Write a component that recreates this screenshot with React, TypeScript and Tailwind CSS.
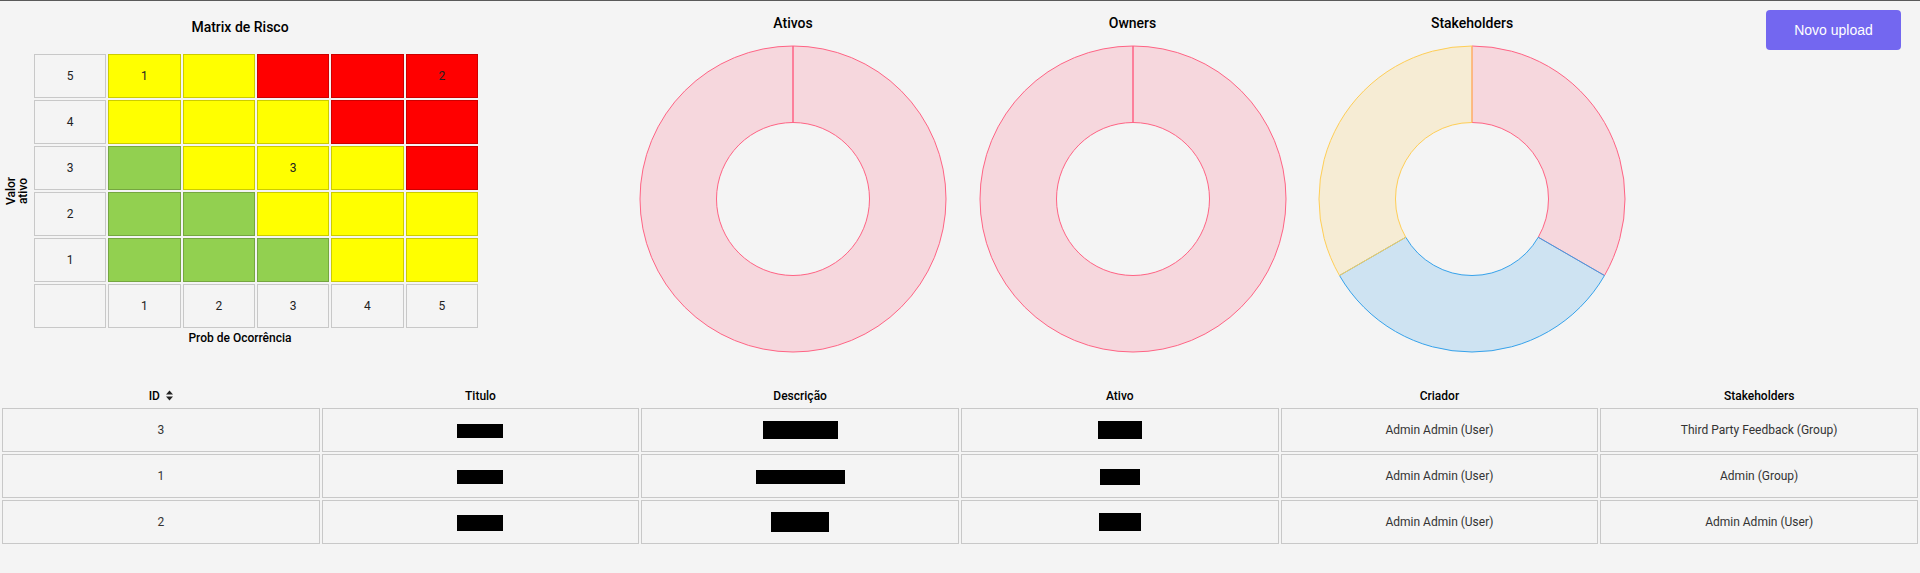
import React from "react";

type Seg = { a0: number; a1: number; fill: string; stroke: string };

const pt = (cx: number, cy: number, r: number, deg: number) => {
  const a = (deg * Math.PI) / 180;
  return `${(cx + r * Math.sin(a)).toFixed(3)} ${(cy - r * Math.cos(a)).toFixed(3)}`;
};

function segPath(cx: number, cy: number, R: number, r: number, a0: number, a1: number) {
  const mid = (a0 + a1) / 2;
  return [
    `M${pt(cx, cy, R, a0)}`,
    `A${R} ${R} 0 0 1 ${pt(cx, cy, R, mid)}`,
    `A${R} ${R} 0 0 1 ${pt(cx, cy, R, a1)}`,
    `L${pt(cx, cy, r, a1)}`,
    `A${r} ${r} 0 0 0 ${pt(cx, cy, r, mid)}`,
    `A${r} ${r} 0 0 0 ${pt(cx, cy, r, a0)}`,
    "Z",
  ].join(" ");
}

const PINK: [string, string] = ["rgba(255,99,132,0.2)", "rgb(255,99,132)"];
const BLUE: [string, string] = ["rgba(54,162,235,0.2)", "rgb(54,162,235)"];
const YELLOW: [string, string] = ["rgba(255,206,86,0.2)", "rgb(255,206,86)"];

function Donut({ segs }: { segs: Seg[] }) {
  const cx = 154;
  const cy = 154;
  const R = 153;
  const r = 76.5;
  return (
    <svg width={308} height={308} viewBox="0 0 308 308" className="block">
      {segs.map((s, i) => (
        <path key={i} d={segPath(cx, cy, R, r, s.a0, s.a1)} fill={s.fill} stroke={s.stroke} strokeWidth={1} />
      ))}
    </svg>
  );
}

function ChartCol({ title, segs }: { title: string; segs: Seg[] }) {
  return (
    <div className="w-[339.5px] flex flex-col items-center pt-[13px]">
      <div className="h-[18px] leading-[18px] text-[14px] font-medium text-black">{title}</div>
      <div className="mt-[13px]">
        <Donut segs={segs} />
      </div>
    </div>
  );
}

type Cell = { t: "g" | "y" | "r" | "n"; v?: string };

const cellCls: Record<Cell["t"], string> = {
  n: "bg-[#f4f4f4] border-[#c8c8c8]",
  y: "bg-[#ffff00] border-[#cccc00]",
  r: "bg-[#ff0000] border-[#cc0000]",
  g: "bg-[#92d050] border-[#75a640]",
};

const matrix: Cell[][] = [
  [{ t: "n", v: "5" }, { t: "y", v: "1" }, { t: "y" }, { t: "r" }, { t: "r" }, { t: "r", v: "2" }],
  [{ t: "n", v: "4" }, { t: "y" }, { t: "y" }, { t: "y" }, { t: "r" }, { t: "r" }],
  [{ t: "n", v: "3" }, { t: "g" }, { t: "y" }, { t: "y", v: "3" }, { t: "y" }, { t: "r" }],
  [{ t: "n", v: "2" }, { t: "g" }, { t: "g" }, { t: "y" }, { t: "y" }, { t: "y" }],
  [{ t: "n", v: "1" }, { t: "g" }, { t: "g" }, { t: "g" }, { t: "y" }, { t: "y" }],
  [{ t: "n", v: "" }, { t: "n", v: "1" }, { t: "n", v: "2" }, { t: "n", v: "3" }, { t: "n", v: "4" }, { t: "n", v: "5" }],
];

function Matrix() {
  return (
    <div className="w-[480px] pt-[17px] flex flex-col">
      <div className="h-[18px] leading-[18px] text-center text-[14px] font-medium text-black">Matrix de Risco</div>
      <div className="mt-[16px] flex">
        <div className="w-[32px] flex items-center justify-center">
          <div className="-rotate-90 whitespace-nowrap text-center text-[12px] leading-[12px] font-medium text-black translate-x-[1px]">
            Valor
            <br />
            ativo
          </div>
        </div>
        <table className="w-[448px] table-fixed border-separate border-spacing-[2px]">
          <tbody>
            {matrix.map((row, i) => (
              <tr key={i}>
                {row.map((c, j) => (
                  <td
                    key={j}
                    className={`h-[44px] p-0 border border-solid text-center align-middle text-[12px] text-[#222] ${cellCls[c.t]}`}
                  >
                    {c.v}
                  </td>
                ))}
              </tr>
            ))}
          </tbody>
        </table>
      </div>
      <div className="h-[16px] leading-[16px] text-center text-[12px] font-medium text-black">Prob de Ocorrência</div>
    </div>
  );
}

function SortIcon() {
  return (
    <svg width="7" height="11" viewBox="0 0 7 11" className="inline-block ml-[6px] align-[-1px]">
      <polygon points="0,4.5 3.5,0.5 7,4.5" fill="#222" />
      <polygon points="0,6.5 7,6.5 3.5,10.5" fill="#222" />
    </svg>
  );
}

function Redact({ w, h }: { w: number; h: number }) {
  return <span className="inline-block bg-black align-middle" style={{ width: w, height: h }} />;
}

const rows = [
  {
    id: "3",
    t: [46, 14],
    d: [75, 18],
    a: [44, 18],
    c: "Admin Admin (User)",
    s: "Third Party Feedback (Group)",
  },
  {
    id: "1",
    t: [46, 14],
    d: [89, 14],
    a: [40, 16],
    c: "Admin Admin (User)",
    s: "Admin (Group)",
  },
  {
    id: "2",
    t: [46, 16],
    d: [58, 20],
    a: [42, 18],
    c: "Admin Admin (User)",
    s: "Admin Admin (User)",
  },
];

export default function App() {
  const td = "h-[44px] p-0 border border-solid border-[#c8c8c8] text-center align-middle text-[12px] text-[#333]";
  const th = "h-[20px] p-0 text-center align-middle text-[12px] font-medium text-black";
  return (
    <div className="min-h-[573px] bg-[#f4f4f4] border-t border-[#5a5a5a] font-['Roboto',sans-serif]">
      <div className="h-[383px] flex items-start">
        <Matrix />
        <div className="w-[143.25px] shrink-0" />
        <ChartCol title="Ativos" segs={[{ a0: 0, a1: 360, fill: PINK[0], stroke: PINK[1] }]} />
        <ChartCol title="Owners" segs={[{ a0: 0, a1: 360, fill: PINK[0], stroke: PINK[1] }]} />
        <ChartCol
          title="Stakeholders"
          segs={[
            { a0: 0, a1: 120, fill: PINK[0], stroke: PINK[1] },
            { a0: 120, a1: 240, fill: BLUE[0], stroke: BLUE[1] },
            { a0: 240, a1: 360, fill: YELLOW[0], stroke: YELLOW[1] },
          ]}
        />
        <div className="flex-1 flex justify-end pr-[19px] pt-[9px]">
          <button className="w-[135px] h-[40px] rounded-[4px] bg-[#7367f0] text-white text-[14px] font-['Liberation_Sans',Arial,sans-serif]">
            Novo upload
          </button>
        </div>
      </div>
      <table className="w-full table-fixed border-separate border-spacing-[2px]">
        <thead>
          <tr>
            <th className={th}>
              ID
              <SortIcon />
            </th>
            <th className={th}>Titulo</th>
            <th className={th}>Descrição</th>
            <th className={th}>Ativo</th>
            <th className={th}>Criador</th>
            <th className={th}>Stakeholders</th>
          </tr>
        </thead>
        <tbody>
          {rows.map((r) => (
            <tr key={r.id}>
              <td className={td}>{r.id}</td>
              <td className={td}>
                <Redact w={r.t[0]} h={r.t[1]} />
              </td>
              <td className={td}>
                <Redact w={r.d[0]} h={r.d[1]} />
              </td>
              <td className={td}>
                <Redact w={r.a[0]} h={r.a[1]} />
              </td>
              <td className={td}>{r.c}</td>
              <td className={td}>{r.s}</td>
            </tr>
          ))}
        </tbody>
      </table>
    </div>
  );
}
